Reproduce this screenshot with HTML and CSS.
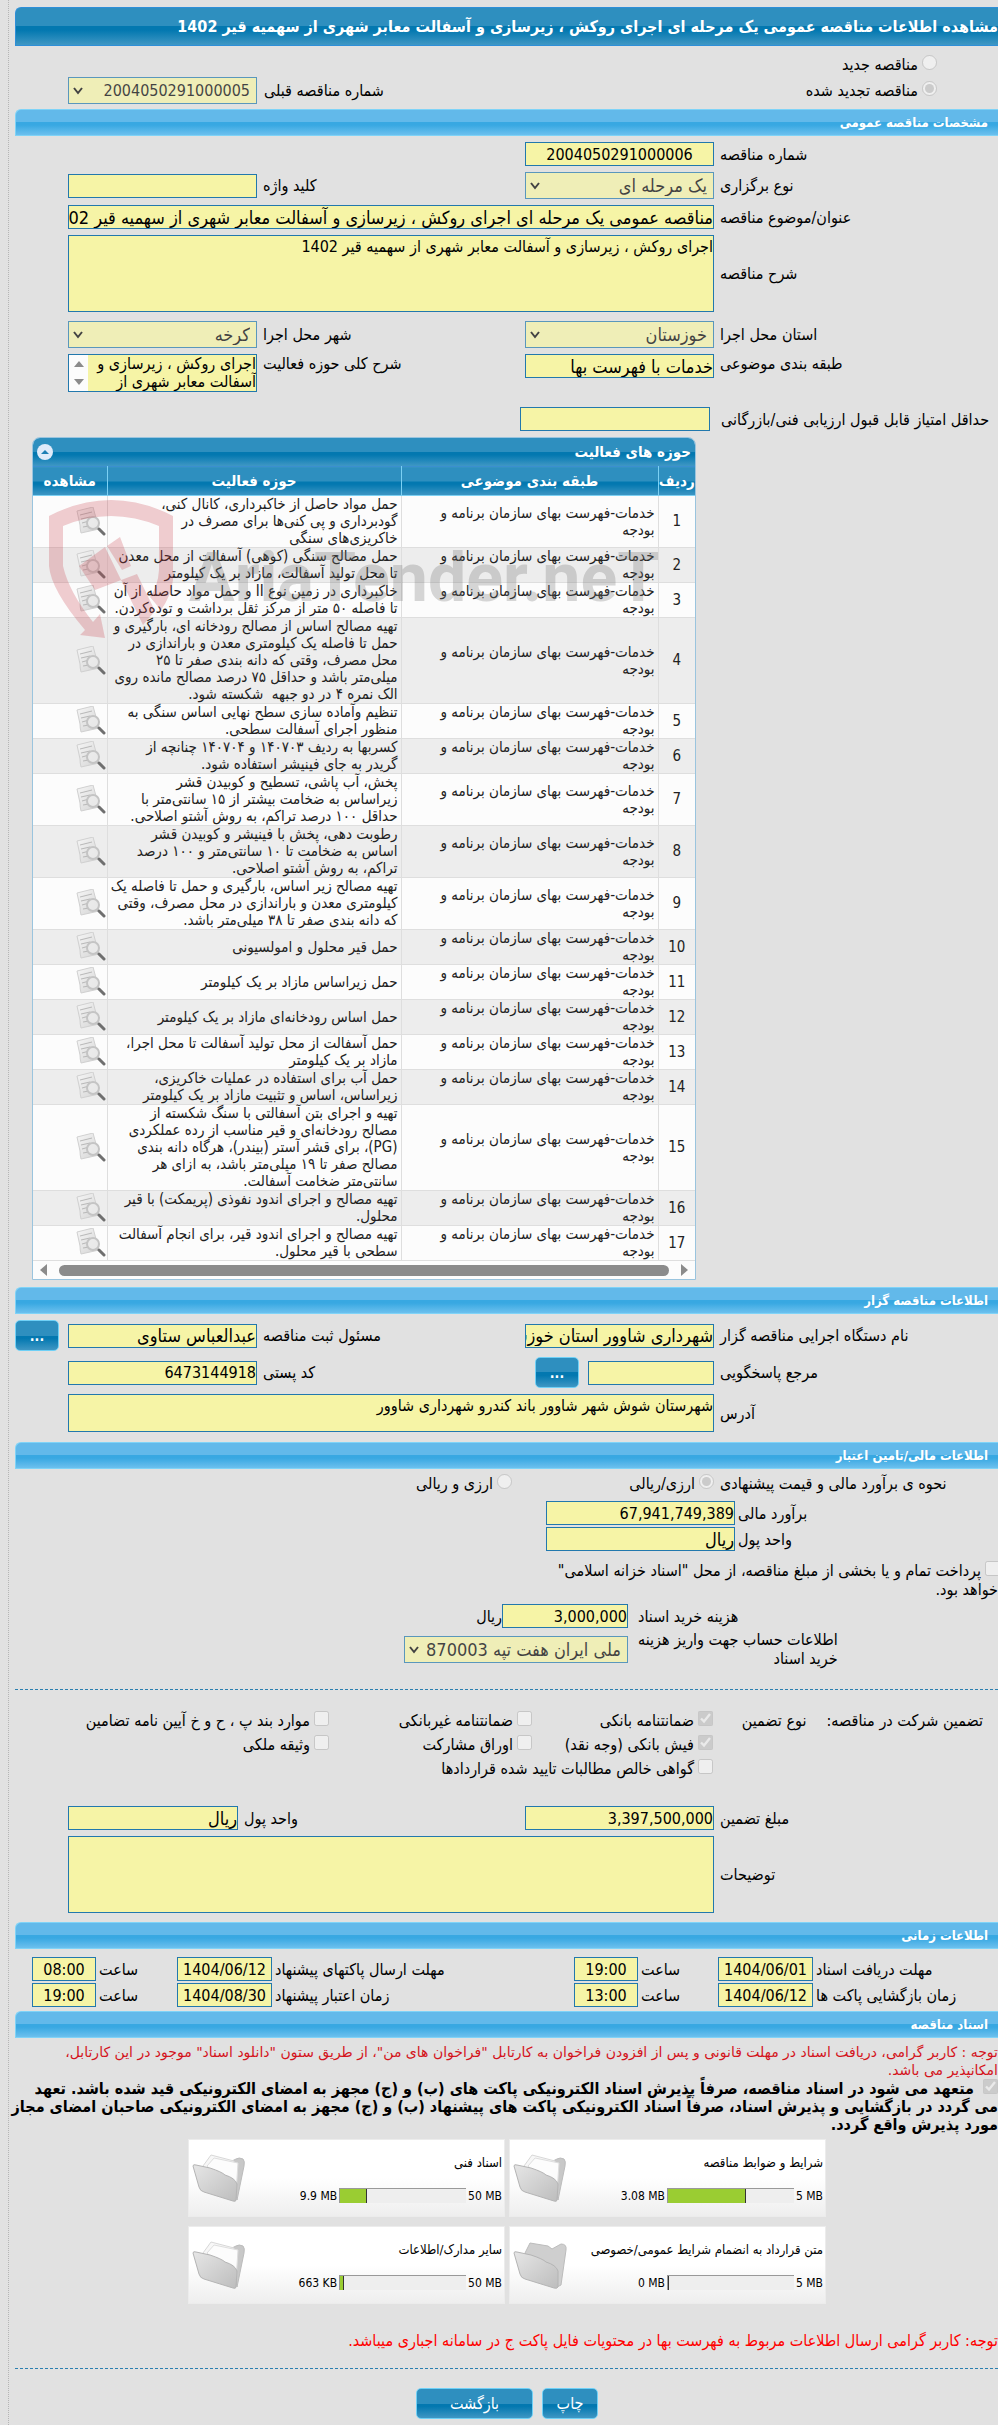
FILE: index.html
```
<!DOCTYPE html>
<html lang="fa" dir="rtl">

<head>
    <meta charset="UTF-8">
    <meta name="viewport" content="width=device-width, initial-scale=1.0">
    <title>مشاهده اطلاعات مناقصه عمومی</title>
    <link rel="stylesheet" href="styles.css">
</head>

<body>
    <svg class="symbols" width="0" height="0" aria-hidden="true">
        <defs>
            <linearGradient id="paper" x1="0" y1="0" x2="1" y2="1">
                <stop offset="0" stop-color="#f6f6f6" />
                <stop offset="1" stop-color="#d4d4d4" />
            </linearGradient>
            <linearGradient id="cover" x1="0" y1="0" x2="1" y2="1">
                <stop offset="0" stop-color="#e6e6e6" />
                <stop offset="1" stop-color="#bdbdbd" />
            </linearGradient>
        </defs>
        <symbol id="look" viewBox="0 0 30 30">
            <path d="M1 4 L17 0 L23 22 L5 26 Q4 22 4 18 Z" fill="url(#paper)" stroke="#d0d0d0" />
            <path d="M4 8 L16 5 M5 12 L14 10 M6 16 L13 14 M7 20 L13 19" stroke="#b8b8b8" fill="none" />
            <circle cx="17" cy="16" r="6" fill="#ebebeb" fill-opacity=".85" stroke="#c4c4c4" stroke-width="2" />
            <path d="M23 22 L28 27" stroke="#6f6f6f" stroke-width="3" stroke-linecap="round" />
        </symbol>
        <symbol id="folder" viewBox="0 0 54 48">
            <path d="M38 8 L44 5 Q47 3 51 5 Q53 7 52 12 L45 46 Z" fill="#c8c8c8" stroke="#bcbcbc" />
            <path d="M11 12 L19 1 L42 7 L43 40 L18 30 Z" fill="#f7f7f7" stroke="#d8d8d8" />
            <path d="M15 12 L22 4 L46 9 L44 40 Z" fill="#fcfcfc" stroke="#dedede" />
            <path d="M1 12 Q1 10 4 11 L18 14 Q30 18 33 21 Q43 24 45 30 L44 46 Q44 48 41 47 L12 38 Q8 37 7 33 Z" fill="url(#cover)" stroke="#b4b4b4" />
        </symbol>
        <symbol id="folder-empty" viewBox="0 0 54 48">
            <path d="M12 12 L17 2 L35 5 L39 8 L48 3 Q54 3 53 9 L48 44 L44 46 Z" fill="#cfcfcf" stroke="#bcbcbc" />
            <path d="M1 12 Q1 10 4 11 L18 14 Q30 18 33 21 Q43 24 45 30 L45 46 Q44 48 41 47 L12 38 Q8 37 7 33 Z" fill="url(#cover)" stroke="#b4b4b4" />
        </symbol>
    </svg>

    <form class="page">
        <h1>مشاهده اطلاعات مناقصه عمومی یک مرحله ای اجرای روکش ، زیرسازی و آسفالت معابر شهری از سهمیه قیر 1402</h1>

        <div class="kind">
            <label><input type="radio" name="kind" disabled>مناقصه جدید</label>
        </div>
        <div class="kind">
            <label><input type="radio" name="kind" checked disabled>مناقصه تجدید شده</label>
            <div class="previous">
                <label for="prev">شماره مناقصه قبلی</label>
                <select class="digits" id="prev" disabled><option>2004050291000005</option></select>
            </div>
        </div>

        <h2>مشخصات مناقصه عمومی</h2>
        <div class="fields">
            <label for="num">شماره مناقصه</label>
            <input class="digits center" id="num" type="text" value="2004050291000006" readonly>
            <span></span><span></span>

            <label for="type">نوع برگزاری</label>
            <select id="type" disabled><option>یک مرحله ای</option></select>
            <label for="keyword">کلید واژه</label>
            <input id="keyword" type="text" readonly>

            <label for="subject">عنوان/موضوع مناقصه</label>
            <input class="wide" id="subject" type="text" value="مناقصه عمومی یک مرحله ای اجرای روکش ، زیرسازی و آسفالت معابر شهری از سهمیه قیر 1402" readonly>

            <label for="desc">شرح مناقصه</label>
            <textarea class="wide tall" id="desc" readonly>اجرای روکش ، زیرسازی و آسفالت معابر شهری از سهمیه قیر 1402</textarea>
        </div>
        <div class="fields places">
            <label for="province">استان محل اجرا</label>
            <select id="province" disabled><option>خوزستان</option></select>
            <label for="city">شهر محل اجرا</label>
            <select id="city" disabled><option>کرخه</option></select>

            <label class="top" for="class">طبقه بندی موضوعی</label>
            <input class="top" id="class" type="text" value="خدمات با فهرست بها" readonly>
            <label class="top" for="scope">شرح کلی حوزه فعالیت</label>
            <div class="scope">
                <textarea id="scope" readonly>اجرای روکش ، زیرسازی و آسفالت معابر شهری از سهمیه قیر 1402</textarea>
                <div class="spin"><i class="up"></i><i class="down"></i></div>
            </div>
        </div>
        <div class="fields score">
            <label for="score">حداقل امتیاز قابل قبول ارزیابی فنی/بازرگانی</label>
            <input id="score" type="text" readonly>
        </div>

        <div class="panel">
            <div class="panel-title">
                <span>حوزه های فعالیت</span>
                <button class="fold" type="button" aria-label="بستن"></button>
            </div>
            <table>
                <thead>
                    <tr><th class="c-row">ردیف</th><th class="c-class">طبقه بندی موضوعی</th><th class="c-field">حوزه فعالیت</th><th>مشاهده</th></tr>
                </thead>
                <tbody>
                    <tr><td>1</td><td>خدمات-فهرست بهای سازمان برنامه و<br>بودجه</td><td>حمل مواد حاصل از خاکبرداری، کانال کنی،<br>گودبرداری و پی کنی‌ها برای مصرف در<br>خاکریزی‌های سنگی</td><td><svg><use href="#look" /></svg></td></tr>
                    <tr><td>2</td><td>خدمات-فهرست بهای سازمان برنامه و<br>بودجه</td><td>حمل مصالح سنگی (کوهی) آسفالت از محل معدن<br>تا محل تولید آسفالت، مازاد بر یک کیلومتر</td><td><svg><use href="#look" /></svg></td></tr>
                    <tr><td>3</td><td>خدمات-فهرست بهای سازمان برنامه و<br>بودجه</td><td>خاکبرداری در زمین نوع II و حمل مواد حاصله از آن<br>تا فاصله ۵۰ متر از مرکز ثقل برداشت و توده‌کردن.</td><td><svg><use href="#look" /></svg></td></tr>
                    <tr><td>4</td><td>خدمات-فهرست بهای سازمان برنامه و<br>بودجه</td><td>تهیه مصالح اساس از مصالح رودخانه ای، بارگیری و<br>حمل تا فاصله یک کیلومتری معدن و باراندازی در<br>محل مصرف، وقتی که دانه بندی صفر تا ۲۵<br>میلی‌متر باشد و حداقل ۷۵ درصد مصالح مانده روی<br>الک نمره ۴ در دو جبهه&nbsp; شکسته شود.</td><td><svg><use href="#look" /></svg></td></tr>
                    <tr><td>5</td><td>خدمات-فهرست بهای سازمان برنامه و<br>بودجه</td><td>تنظیم وآماده سازی سطح نهایی اساس سنگی به<br>منظور اجرای آسفالت سطحی.</td><td><svg><use href="#look" /></svg></td></tr>
                    <tr><td>6</td><td>خدمات-فهرست بهای سازمان برنامه و<br>بودجه</td><td>کسربها به ردیف ۱۴۰۷۰۳ و ۱۴۰۷۰۴ چنانچه از<br>گریدر به جای فینیشر استفاده شود.</td><td><svg><use href="#look" /></svg></td></tr>
                    <tr><td>7</td><td>خدمات-فهرست بهای سازمان برنامه و<br>بودجه</td><td>پخش، آب پاشی، تسطیح و کوبیدن قشر<br>زیراساس به ضخامت بیشتر از ۱۵ سانتی‌متر با<br>حداقل ۱۰۰ درصد تراکم، به روش آشتو اصلاحی.</td><td><svg><use href="#look" /></svg></td></tr>
                    <tr><td>8</td><td>خدمات-فهرست بهای سازمان برنامه و<br>بودجه</td><td>رطوبت دهی، پخش با فینیشر و کوبیدن قشر<br>اساس به ضخامت تا ۱۰ سانتی‌متر و ۱۰۰ درصد<br>تراکم، به روش آشتو اصلاحی.</td><td><svg><use href="#look" /></svg></td></tr>
                    <tr><td>9</td><td>خدمات-فهرست بهای سازمان برنامه و<br>بودجه</td><td>تهیه مصالح زیر اساس، بارگیری و حمل تا فاصله یک<br>کیلومتری معدن و باراندازی در محل مصرف، وقتی<br>که دانه بندی صفر تا ۳۸ میلی‌متر باشد.</td><td><svg><use href="#look" /></svg></td></tr>
                    <tr><td>10</td><td>خدمات-فهرست بهای سازمان برنامه و<br>بودجه</td><td>حمل قیر محلول و امولسیونی</td><td><svg><use href="#look" /></svg></td></tr>
                    <tr><td>11</td><td>خدمات-فهرست بهای سازمان برنامه و<br>بودجه</td><td>حمل زیراساس مازاد بر یک کیلومتر</td><td><svg><use href="#look" /></svg></td></tr>
                    <tr><td>12</td><td>خدمات-فهرست بهای سازمان برنامه و<br>بودجه</td><td>حمل اساس رودخانه‌ای مازاد بر یک کیلومتر</td><td><svg><use href="#look" /></svg></td></tr>
                    <tr><td>13</td><td>خدمات-فهرست بهای سازمان برنامه و<br>بودجه</td><td>حمل آسفالت از محل تولید آسفالت تا محل اجرا،<br>مازاد بر یک کیلومتر</td><td><svg><use href="#look" /></svg></td></tr>
                    <tr><td>14</td><td>خدمات-فهرست بهای سازمان برنامه و<br>بودجه</td><td>حمل آب برای استفاده در عملیات خاکریزی،<br>زیراساس، اساس و تثبیت مازاد بر یک کیلومتر</td><td><svg><use href="#look" /></svg></td></tr>
                    <tr><td>15</td><td>خدمات-فهرست بهای سازمان برنامه و<br>بودجه</td><td>تهیه و اجرای بتن آسفالتی با سنگ شکسته از<br>مصالح رودخانه‌ای و قیر مناسب از رده عملکردی<br>(PG)، برای قشر آستر (بیندر)، هرگاه دانه بندی<br>مصالح صفر تا ۱۹ میلی‌متر باشد، به ازای هر<br>سانتی‌متر ضخامت آسفالت.</td><td><svg><use href="#look" /></svg></td></tr>
                    <tr><td>16</td><td>خدمات-فهرست بهای سازمان برنامه و<br>بودجه</td><td>تهیه مصالح و اجرای اندود نفوذی (پریمکت) با قیر<br>محلول.</td><td><svg><use href="#look" /></svg></td></tr>
                    <tr><td>17</td><td>خدمات-فهرست بهای سازمان برنامه و<br>بودجه</td><td>تهیه مصالح و اجرای اندود قیر، برای انجام آسفالت<br>سطحی با قیر محلول.</td><td><svg><use href="#look" /></svg></td></tr>
                </tbody>
            </table>
            <div class="scrollbar"><i class="next"></i><div class="thumb"></div><i class="prev"></i></div>
            <div class="watermark" dir="ltr">
                <svg width="126" height="138" viewBox="0 0 126 138">
                    <path d="M0 16 Q62 -16 124 16 L124 80 Q122 96 112 110 L101 97 Q109 86 110 70 L110 26 Q62 6 14 26 L14 66 Q20 92 44 122 L51 114 L56 138 L31 135 L36 130 Q2 90 0 66 Z" />
                    <path d="M58 46 L71 37 L82 66 L73 70 Z M56 47 L94 125 L106 111 L88 74 L46 90 L38 78 L30 66 Z" />
                </svg>
                <span>AriaTender.neT</span>
            </div>
        </div>

        <h2>اطلاعات مناقصه گزار</h2>
        <div class="fields owner">
            <label for="org">نام دستگاه اجرایی مناقصه گزار</label>
            <input id="org" type="text" value="شهرداری شاوور استان خوزستان" readonly>
            <label for="officer">مسئول ثبت مناقصه</label>
            <div class="with-more">
                <input id="officer" type="text" value="عبدالعباس ستاوی" readonly>
                <button type="button">...</button>
            </div>

            <label for="contact">مرجع پاسخگویی</label>
            <div class="with-more">
                <input class="short" id="contact" type="text" readonly>
                <button type="button">...</button>
            </div>
            <label for="postal">کد پستی</label>
            <input class="digits" id="postal" type="text" value="6473144918" readonly>

            <label for="address">آدرس</label>
            <textarea class="wide" id="address" readonly>شهرستان شوش شهر شاوور باند کندرو شهرداری شاوور</textarea>
        </div>

        <h2>اطلاعات مالی/تامین اعتبار</h2>
        <div class="fields currency">
            <span class="caption">نحوه ی برآورد مالی و قیمت پیشنهادی</span>
            <label><input type="radio" name="currency" checked disabled>ارزی/ریالی</label>
            <label><input type="radio" name="currency" disabled>ارزی و ریالی</label>
        </div>
        <div class="estimate">
            <label for="estimate">برآورد مالی</label>
            <input class="digits" id="estimate" type="text" value="67,941,749,389" readonly>
            <label for="unit">واحد پول</label>
            <input id="unit" type="text" value="ریال" readonly>
        </div>
        <div class="treasury">
            <label><input type="checkbox" disabled>پرداخت تمام و یا بخشی از مبلغ مناقصه، از محل "اسناد خزانه اسلامی"<br>خواهد بود.</label>
        </div>
        <div class="purchase">
            <label for="cost">هزینه خرید اسناد</label>
            <div class="with-unit"><input class="digits" id="cost" type="text" value="3,000,000" readonly>ریال</div>
            <label for="account">اطلاعات حساب جهت واریز هزینه<br>خرید اسناد</label>
            <select id="account" disabled><option>ملی ایران هفت تپه 0870003</option></select>
        </div>

        <hr>

        <div class="guarantee">
            <div class="lead"><span>تضمین شرکت در مناقصه:</span><span>نوع تضمین</span></div>
            <div class="checks">
                <label><input type="checkbox" checked disabled>ضمانتنامه بانکی</label>
                <label><input type="checkbox" disabled>ضمانتنامه غیربانکی</label>
                <label><input type="checkbox" disabled>موارد بند پ ، ح و خ آیین نامه تضامین</label>
                <label><input type="checkbox" checked disabled>فیش بانکی (وجه نقد)</label>
                <label><input type="checkbox" disabled>اوراق مشارکت</label>
                <label><input type="checkbox" disabled>وثیقه ملکی</label>
                <label class="long"><input type="checkbox" disabled>گواهی خالص مطالبات تایید شده قراردادها</label>
            </div>
        </div>
        <div class="fields amount">
            <label for="amount">مبلغ تضمین</label>
            <input class="digits" id="amount" type="text" value="3,397,500,000" readonly>
            <label for="unit2">واحد پول</label>
            <input id="unit2" type="text" value="ریال" readonly>

            <label for="notes">توضیحات</label>
            <textarea class="wide tall" id="notes" readonly></textarea>
        </div>

        <h2>اطلاعات زمانی</h2>
        <div class="times">
            <label for="d1">مهلت دریافت اسناد</label>
            <input class="digits" id="d1" type="text" value="1404/06/01" readonly>
            <label for="t1">ساعت</label>
            <input class="digits" id="t1" type="text" value="19:00" readonly>
            <label for="d2">مهلت ارسال پاکتهای پیشنهاد</label>
            <input class="digits" id="d2" type="text" value="1404/06/12" readonly>
            <label for="t2">ساعت</label>
            <input class="digits" id="t2" type="text" value="08:00" readonly>

            <label for="d3">زمان بازگشایی پاکت ها</label>
            <input class="digits" id="d3" type="text" value="1404/06/12" readonly>
            <label for="t3">ساعت</label>
            <input class="digits" id="t3" type="text" value="13:00" readonly>
            <label for="d4">زمان اعتبار پیشنهاد</label>
            <input class="digits" id="d4" type="text" value="1404/08/30" readonly>
            <label for="t4">ساعت</label>
            <input class="digits" id="t4" type="text" value="19:00" readonly>
        </div>

        <h2>اسناد مناقصه</h2>
        <p class="notice">توجه : کاربر گرامی، دریافت اسناد در مهلت قانونی و پس از افزودن فراخوان به کارتابل "فراخوان های من"، از طریق ستون "دانلود اسناد" موجود در این کارتابل،<br>امکانپذیر می باشد.</p>
        <label class="pledge"><input type="checkbox" checked disabled> متعهد می شود در اسناد مناقصه، صرفاً پذیرش اسناد الکترونیکی پاکت های (ب) و (ج) مجهز به امضای الکترونیکی قید شده باشد. تعهد<br>می گردد در بازگشایی و پذیرش اسناد، صرفاً اسناد الکترونیکی پاکت های پیشنهاد (ب) و (ج) مجهز به امضای الکترونیکی صاحبان امضای مجاز<br>مورد پذیرش واقع گردد.</label>

        <div class="docs">
            <div class="doc">
                <div class="info">
                    <a href="#">شرایط و ضوابط مناقصه</a>
                    <div class="usage"><span dir="ltr">5 MB</span><div class="bar"><i style="width: 62%"></i></div><span dir="ltr">3.08 MB</span></div>
                </div>
                <svg><use href="#folder" /></svg>
            </div>
            <div class="doc">
                <div class="info">
                    <a href="#">اسناد فنی</a>
                    <div class="usage"><span dir="ltr">50 MB</span><div class="bar"><i style="width: 21%"></i></div><span dir="ltr">9.9 MB</span></div>
                </div>
                <svg><use href="#folder" /></svg>
            </div>
            <div class="doc">
                <div class="info">
                    <a href="#">متن قرارداد به انضمام شرایط عمومی/خصوصی</a>
                    <div class="usage"><span dir="ltr">5 MB</span><div class="bar"><i style="width: 0%"></i></div><span dir="ltr">0 MB</span></div>
                </div>
                <svg><use href="#folder-empty" /></svg>
            </div>
            <div class="doc">
                <div class="info">
                    <a href="#">سایر مدارک/اطلاعات</a>
                    <div class="usage"><span dir="ltr">50 MB</span><div class="bar"><i style="width: 3%"></i></div><span dir="ltr">663 KB</span></div>
                </div>
                <svg><use href="#folder" /></svg>
            </div>
        </div>

        <p class="warning">توجه: کاربر گرامی ارسال اطلاعات مربوط به فهرست بها در محتویات فایل پاکت ج در سامانه اجباری میباشد.</p>

        <hr>

        <div class="actions">
            <button type="button">چاپ</button>
            <button class="back" type="button">بازگشت</button>
        </div>
    </form>
</body>

</html>
```
FILE: styles.css
```
* {
    box-sizing: border-box;
}

body {
    margin: 0;
    background-color: #e1e1e1;
    overflow-x: hidden;
}

body, input, select, textarea, button {
    font-family: "DejaVu Sans Condensed", "DejaVu Sans", sans-serif;
    font-size: 16px;
    color: #000;
}

.symbols {
    position: absolute;
}

.page {
    margin-left: 8px;
    padding: 7px 0 6px 6px;
    border-left: 1px dotted #b5b5b5;
}

h1 {
    margin: 0 0 5px;
    height: 39px;
    line-height: 38px;
    font-size: 16px;
    color: #fff;
    white-space: nowrap;
    border: 1px solid #2e8fd8;
    border-right: 0;
    border-radius: 6px 0 0 0;
    background: linear-gradient(#2e8fbf 0, #2e8fbf 50%, #0378b0 50%, #0378b0 60%, #3f97c4 100%);
}

h2 {
    margin: 0;
    height: 27px;
    line-height: 26px;
    padding-right: 10px;
    font-size: 13px;
    color: #fff;
    border: 1px solid #7fd3f7;
    border-right: 0;
    border-radius: 6px 0 0 0;
    background: linear-gradient(#62b9ea 0, #62b9ea 48%, #38a8e2 48%, #38a8e2 60%, #6cc0ee 100%);
}

hr {
    margin: 0;
    border: 0;
    border-top: 1px dashed #2b7fb0;
}

input[type="text"], textarea, select {
    border: 1px solid #2278ad;
    background-color: #f6f4a6;
    padding: 0;
    margin: 0;
    border-radius: 0;
}

input[type="text"] {
    height: 24px;
    width: 100%;
    font-size: 18px;
}

input.digits[type="text"], select.digits {
    font-size: 16px;
}

textarea {
    display: block;
    width: 100%;
    height: 38px;
    padding-top: 2px;
    line-height: 18px;
    resize: none;
    overflow: hidden;
}

select {
    appearance: none;
    height: 27px;
    width: 100%;
    padding: 0 6px 0 22px;
    font-size: 18px;
    opacity: 0.7;
    color: #000;
    background: #f6f4a6 url("data:image/svg+xml,%3Csvg xmlns='http://www.w3.org/2000/svg' width='10' height='8'%3E%3Cpath d='M1 1L5 6L9 1' fill='none' stroke='black' stroke-width='2'/%3E%3C/svg%3E") no-repeat 4px 9px;
}

input[type="radio"], input[type="checkbox"] {
    width: 15px;
    height: 15px;
    margin: 0 0 0 4px;
    vertical-align: 0;
}

input.center {
    text-align: center;
}

.kind {
    display: flex;
    align-items: center;
    justify-content: space-between;
    height: 26px;
    padding: 0 61px 0 53px;
}

.kind + h2 {
    margin-top: 6px;
}

.previous {
    display: flex;
    align-items: center;
    gap: 7px;
    white-space: nowrap;
}

.previous select {
    width: 189px;
}

.fields {
    display: grid;
    grid-template-columns: minmax(0, 1fr) 189px 268px 189px;
    align-items: center;
    row-gap: 6px;
    padding: 6px 0 0 53px;
}

.fields > label, .fields > .caption {
    text-align: left;
    padding-left: 6px;
    white-space: nowrap;
}

.fields .wide {
    grid-column: 2 / 5;
}

.tall {
    height: 77px;
}

.fields .top {
    align-self: start;
}

.places {
    padding-top: 9px;
}

.scope {
    display: flex;
    height: 38px;
    border: 1px solid #2278ad;
}

.scope textarea {
    padding: 0;
    border: 0;
    height: 36px;
}

.spin {
    display: flex;
    flex-direction: column;
    justify-content: space-between;
    align-items: center;
    width: 19px;
    flex: none;
    padding: 6px 0;
    background-color: #fcfcfc;
}

.up, .down {
    border: 5px solid transparent;
}

.up {
    border-top: 0;
    border-bottom: 6px solid #8b8b8b;
}

.down {
    border-bottom: 0;
    border-top: 6px solid #8b8b8b;
}

.score {
    padding-top: 15px;
    grid-template-columns: 288px 190px;
}

.fields.score label {
    padding-left: 11px;
}

.panel {
    position: relative;
    width: 664px;
    margin: 6px 302px 7px 0;
    border: 1px solid #9ac4de;
    border-radius: 8px 8px 0 0;
    background-color: #fcfcfc;
    overflow: hidden;
}

.panel-title {
    display: flex;
    align-items: center;
    justify-content: space-between;
    height: 28px;
    padding: 0 4px;
    font-size: 15px;
    font-weight: bold;
    color: #fff;
    background: linear-gradient(#2e8fbf 0, #2e8fbf 50%, #0378b0 50%, #0378b0 60%, #3f97c4 100%);
}

table {
    width: 100%;
    table-layout: fixed;
    border-collapse: collapse;
    font-size: 15px;
    line-height: 17px;
    color: #222;
}

.c-row {
    width: 37px;
}

.c-class {
    width: 257px;
}

.c-field {
    width: 294px;
}

th {
    height: 29px;
    padding: 0;
    color: #fff;
    white-space: nowrap;
    border-left: 1px solid #7cd0f3;
    border-top: 1px solid #3a8fd0;
    border-bottom: 1px solid #7cd0f3;
    background: linear-gradient(#2e8fbf 0, #2e8fbf 50%, #0378b0 50%, #0378b0 60%, #3f97c4 100%);
}

td {
    padding: 0 3px;
    white-space: nowrap;
    border-left: 1px solid #dedede;
    border-bottom: 1px solid #dedede;
}

th:last-child, td:last-child {
    border-left: 0;
}

td:first-child {
    text-align: center;
}

td:last-child {
    padding: 0 1px;
}

tbody tr:nth-child(even) {
    background-color: #ededed;
}

td svg {
    display: block;
    width: 30px;
    height: 30px;
}

.scrollbar {
    display: flex;
    align-items: center;
    gap: 12px;
    height: 18px;
    padding: 0 7px;
}

.thumb {
    flex: 1;
    height: 11px;
    border-radius: 6px;
    background-color: #8b8b8b;
}

.next, .prev {
    border: 6px solid transparent;
}

.next {
    border-right: 0;
    border-left: 7px solid #8b8b8b;
}

.prev {
    border-left: 0;
    border-right: 7px solid #8b8b8b;
}

/* faded brand over the first rows */
.watermark {
    position: absolute;
    left: 16px;
    top: 62px;
    display: flex;
    align-items: flex-start;
    gap: 14px;
    pointer-events: none;
}

.watermark svg {
    fill: rgba(200, 60, 70, 0.25);
}

.watermark span {
    margin-top: 38px;
    font-family: Roboto, "Liberation Sans", sans-serif;
    font-weight: bold;
    font-size: 68px;
    line-height: 80px;
    color: rgba(110, 110, 110, 0.28);
}

button {
    height: 31px;
    color: #fff;
    border: 1px solid #6fd0f6;
    border-radius: 5px;
    background: linear-gradient(#2e8fbf 0, #2e8fbf 50%, #0378b0 50%, #0378b0 60%, #3f97c4 100%);
}

.fold {
    width: 16px;
    height: 16px;
    padding: 0;
    border: 0;
    border-radius: 8px;
    background: #e0ebfa;
}

.fold::before {
    content: "";
    display: block;
    margin: 0 auto;
    width: 0;
    border: 4px solid transparent;
    border-top: 0;
    border-bottom: 4px solid #1e7fb4;
}

.with-more {
    display: flex;
    align-items: center;
    gap: 9px;
}

.with-more input[type="text"] {
    flex: none;
}

.with-more button {
    flex: none;
    width: 44px;
    font-size: 14px;
    font-weight: bold;
}

.with-more input.short {
    width: 126px;
}

.owner + h2 {
    margin-top: 10px;
}

.currency {
    grid-template-columns: minmax(0, 1fr) 202px 444px;
    height: 29px;
    padding-top: 0;
}

.fields.currency label {
    text-align: right;
    padding: 0;
}

.estimate {
    display: grid;
    grid-template-columns: 263px 189px;
    align-items: center;
    row-gap: 2px;
    padding-top: 3px;
}

.estimate label {
    text-align: left;
    padding-left: 3px;
}

.treasury {
    margin: 10px 0 5px -2px;
    line-height: 19px;
}

.treasury input {
    margin-right: -2px;
}

.purchase {
    display: grid;
    grid-template-columns: 370px 224px;
    align-items: center;
    row-gap: 2px;
    line-height: 19px;
    margin-bottom: 21px;
}

.purchase > label {
    justify-self: end;
    padding-left: 10px;
    white-space: nowrap;
}

.with-unit {
    display: flex;
    align-items: center;
}

.with-unit input[type="text"] {
    width: 126px;
}

.guarantee {
    display: flex;
    padding: 19px 0;
    line-height: 24px;
}

.lead {
    display: flex;
    gap: 20px;
    width: 285px;
    flex: none;
    padding-right: 15px;
    white-space: nowrap;
}

.checks {
    display: grid;
    grid-template-columns: 181px 203px 245px;
    white-space: nowrap;
}

.checks .long {
    grid-column: 1 / 4;
}

.amount {
    grid-template-columns: minmax(0, 1fr) 189px 287px 170px;
    margin-bottom: 9px;
}

.times {
    display: grid;
    grid-template-columns: minmax(0, 1fr) 95px 80px 64px 302px 95px 81px 64px;
    align-items: center;
    row-gap: 2px;
    padding: 8px 0 4px 17px;
}

.times label {
    text-align: left;
    padding-left: 3px;
    white-space: nowrap;
}

.times input[type="text"] {
    text-align: center;
}

.notice, .pledge {
    display: block;
    margin: 0;
    line-height: 18px;
    white-space: nowrap;
}

.notice {
    margin-top: 5px;
    font-family: "DejaVu Sans", sans-serif;
    font-size: 14px;
    color: #d4141c;
}

.pledge {
    font-weight: bold;
}

.docs {
    display: grid;
    grid-template-columns: 317px 317px;
    gap: 9px 4px;
    padding: 5px 172px 0 0;
}

.doc {
    display: flex;
    justify-content: space-between;
    height: 78px;
    padding: 14px 2px 0 3px;
    font-size: 12px;
    border: 1px solid #ececec;
    background: linear-gradient(#fff 0, #fff 50%, #eee 100%);
}

.doc a {
    display: block;
    height: 18px;
    font-size: 13px;
    line-height: 18px;
    color: #000;
    text-decoration: none;
    white-space: nowrap;
}

.doc svg {
    width: 54px;
    height: 48px;
    flex: none;
}

.info {
    width: 240px;
}

.usage {
    display: flex;
    align-items: center;
    gap: 2px;
    margin-top: 16px;
    white-space: nowrap;
}

.bar {
    display: flex;
    justify-content: flex-end;
    width: 127px;
    height: 15px;
    border-top: 1px solid #999;
    border-left: 1px solid #999;
    background-color: #eee;
}

.bar i {
    background-color: #9acd32;
    border-right: 1px solid #333;
}

.warning {
    margin: 27px 0 17px;
    line-height: 20px;
    color: #f00;
    white-space: nowrap;
}

.actions {
    display: flex;
    gap: 9px;
    padding: 19px 400px 0 0;
}

.actions button {
    width: 56px;
}

.actions .back {
    width: 117px;
}
```
